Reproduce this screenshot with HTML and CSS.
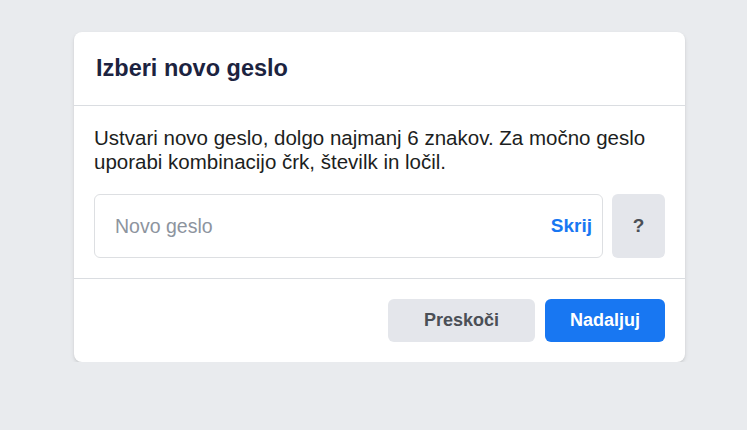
FILE: index.html
```html
<!DOCTYPE html>
<html lang="sl">
<head>
  <meta charset="UTF-8">
  <title>Izberi novo geslo</title>
  <link rel="stylesheet" href="styles.css">
</head>
<body>

  <div class="card">
    <div class="card-head">
      <h2>Izberi novo geslo</h2>
    </div>

    <div class="card-body">
      <p>Ustvari novo geslo, dolgo najmanj 6 znakov. Za močno geslo uporabi kombinacijo črk, številk in ločil.</p>

      <div class="pass-row">
        <label class="pass-field">
          <input type="password" placeholder="Novo geslo">
          <span class="toggle">Skrij</span>
        </label>
        <button type="button" class="help">?</button>
      </div>
    </div>

    <div class="card-foot">
      <button type="button" class="btn btn-grey">Preskoči</button>
      <button type="button" class="btn btn-blue">Nadaljuj</button>
    </div>
  </div>

</body>
</html>
```

FILE: styles.css
```css
body {
  margin: 0;
  padding: 32px 0 0 74px;
  background-color: #e9ebee;
  font-family: "Liberation Sans", Arial, sans-serif;
  color: #1c1e21;
}

.card {
  width: 611px;
  background-color: #fff;
  border-radius: 8px;
  box-shadow: 0 2px 4px rgba(0, 0, 0, 0.1), 0 1px 2px rgba(0, 0, 0, 0.06);
}

.card-head {
  padding: 0 22px;
  height: 73px;
  display: flex;
  align-items: center;
  border-bottom: 1px solid #dadde1;
}

.card-head h2 {
  margin: 0;
  font-size: 23.5px;
  font-weight: bold;
  color: #1c2340;
}

.card-body {
  padding: 20px 20px 20px;
  border-bottom: 1px solid #dadde1;
}

.card-body p {
  margin: 0 0 20px;
  font-size: 20.5px;
  line-height: 24px;
}

.pass-row {
  display: flex;
  gap: 9px;
}

.pass-field {
  flex: 1;
  display: flex;
  align-items: center;
  height: 62px;
  border: 1px solid #dddfe2;
  border-radius: 6px;
  padding: 0 10px 0 20px;
}

.pass-field input {
  flex: 1;
  min-width: 0;
  border: none;
  outline: none;
  font-family: inherit;
  font-size: 19.5px;
  color: #1c1e21;
  padding: 0;
}

.pass-field input::placeholder {
  color: #8d949e;
}

.toggle {
  color: #1877f2;
  font-weight: bold;
  font-size: 19px;
}

.help {
  width: 53px;
  height: 64px;
  border: none;
  border-radius: 6px;
  background-color: #e4e6eb;
  color: #4b4f56;
  font-family: inherit;
  font-weight: bold;
  font-size: 19px;
}

.card-foot {
  display: flex;
  justify-content: flex-end;
  gap: 10px;
  padding: 20px;
}

.btn {
  height: 43px;
  border: none;
  border-radius: 6px;
  font-family: inherit;
  font-weight: bold;
  font-size: 18px;
}

.btn-grey {
  width: 147px;
  background-color: #e4e6eb;
  color: #4b4f56;
}

.btn-blue {
  width: 120px;
  background-color: #1877f2;
  color: #fff;
}
```
